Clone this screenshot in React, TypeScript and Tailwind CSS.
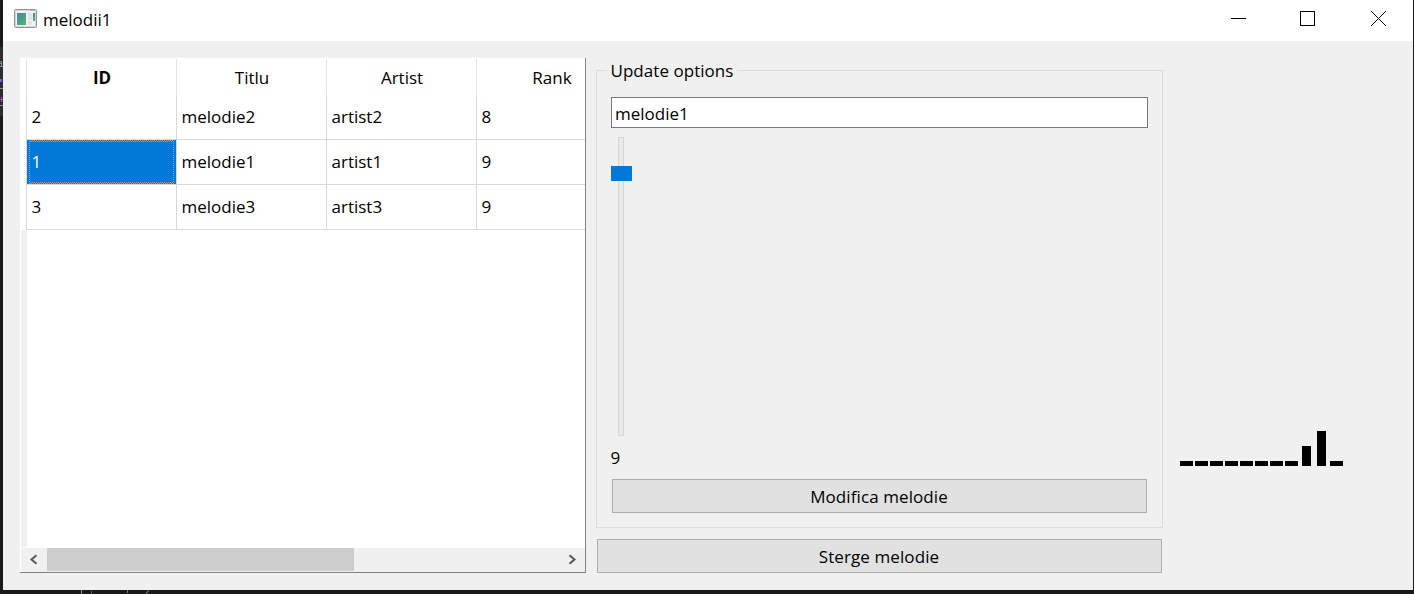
import React from "react";

const columns = ["ID", "Titlu", "Artist", "Rank"];
const rows = [
  ["2", "melodie2", "artist2", "8"],
  ["1", "melodie1", "artist1", "9"],
  ["3", "melodie3", "artist3", "9"],
];

function AppIcon() {
  return (
    <svg width="24" height="20" viewBox="0 0 24 20" className="shrink-0">
      <defs>
        <linearGradient id="pane" x1="0" y1="0" x2="0.6" y2="1">
          <stop offset="0" stopColor="#4a80b4" />
          <stop offset="1" stopColor="#52b06c" />
        </linearGradient>
      </defs>
      <rect x="0.5" y="0.5" width="22" height="18" rx="1" fill="#f2f3f4" stroke="#92979d" />
      <rect x="1.5" y="1.5" width="20" height="16" fill="none" stroke="#d3d7dc" />
      <rect x="16" y="1" width="5" height="1" fill="#a9b4d4" />
      <rect x="3" y="4" width="9" height="12" fill="url(#pane)" />
      <rect x="14" y="4" width="4" height="7" fill="#e1e3e5" />
      <rect x="14" y="12" width="4" height="4" fill="#e1e3e5" />
      <rect x="19" y="4" width="2" height="8" fill="url(#pane)" />
    </svg>
  );
}

function TitleBar() {
  return (
    <header className="flex h-[41px] shrink-0 items-start bg-white pl-[11px]">
      <div className="flex h-[38px] grow items-center pt-px">
        <div className="mb-[2px]"><AppIcon /></div>
        <span className="ml-[5px]">melodii1</span>
      </div>
      <svg width="182" height="38" viewBox="0 0 182 38" fill="none" stroke="#000" shapeRendering="crispEdges">
        <path d="M0 18.5h15" />
        <rect x="69.5" y="11.5" width="14" height="14" />
        <path d="M140 11l15 15M155 11l-15 15" shapeRendering="auto" />
      </svg>
    </header>
  );
}

const checker =
  "absolute bg-[conic-gradient(#ff8728_25%,#0078d7_0_50%,#ff8728_0_75%,#0078d7_0)] bg-[length:2px_2px] ";

function FocusFrame() {
  return (
    <>
      <i className={checker + "top-0 left-[2px] h-[2px] w-[145px]"} />
      <i className={checker + "top-[42px] left-[2px] h-[2px] w-[145px]"} />
      <i className={checker + "top-[2px] left-[2px] h-[40px] w-px"} />
      <i className={checker + "top-[2px] left-[146px] h-[40px] w-px"} />
    </>
  );
}

function SongTable() {
  return (
    <div className="flex h-[515px] w-[566px] flex-col border-r border-b border-[#82828c] bg-white pl-px">
      <div className="ml-[5px] grid h-[37px] grid-cols-[151px_150px_150px_108px] pt-px">
        {columns.map((name, i) => (
          <div
            key={name}
            className={
              "flex items-center justify-center pt-0.5 " +
              (i === 0 ? "border-x border-[#e5e5e5] pl-px font-bold" : i < 3 ? "border-r border-[#e5e5e5] pl-px" : "pl-[42px]")
            }
          >
            {name}
          </div>
        ))}
      </div>
      {rows.map((row, r) => (
        <div key={row[0]} className="ml-[5px] grid h-[45px] shrink-0 grid-cols-[151px_150px_150px_108px]">
          {row.map((value, c) => (
            <div
              key={c}
              className={
                "relative flex items-center border-b border-[#d8d8d8] pl-[4.5px] " +
                (c === 0 ? "border-x " : c < 3 ? "border-r " : "") +
                (r === 1 && c === 0 ? "bg-[#0078d7] bg-clip-padding text-white" : "")
              }
            >
              {r === 1 && c === 0 && <FocusFrame />}
              {value}
            </div>
          ))}
        </div>
      ))}
      <div className="h-[317px] w-1.5 shrink-0 bg-[#f0f0f0]" />
      <div className="mt-px flex h-[24px] items-start bg-[#f0f0f0]">
        <svg width="26" height="24" fill="none" stroke="#5a5a5a" strokeWidth="2.1">
          <path d="M15.5 7.2l-5 4.3l5 4.3" />
        </svg>
        <div className="h-[23px] w-[307px] bg-[#cdcdcd]" />
        <svg className="ml-auto" width="26" height="24" fill="none" stroke="#5a5a5a" strokeWidth="2.1">
          <path d="M10.5 7.2l5 4.3l-5 4.3" />
        </svg>
      </div>
    </div>
  );
}

function Slider() {
  return (
    <div className="relative mt-[9px] h-[299px] w-[21px]">
      <div className="ml-[7px] h-full w-1.5 border border-[#d6d6d6] bg-[#e7eaea]" />
      <div className="absolute top-[29px] left-0 h-[15px] w-[21px] bg-[#0078d7]" />
    </div>
  );
}

function PushButton({ label, className }: { label: string; className: string }) {
  return (
    <button
      className={
        "flex items-center justify-center border border-[#adadad] bg-[#e1e1e1] pt-px pr-px tracking-[0.09px] " + className
      }
    >
      {label}
    </button>
  );
}

function UpdatePanel() {
  return (
    <div className="ml-2.5 flex w-[567px] flex-col">
      <section className="mt-3 flex h-[458px] flex-col border border-[#dcdcdc] px-3.5">
        <h2 className="-mt-[13px] -ml-[4.5px] h-[26px] self-start bg-[#f0f0f0] px-1 leading-[26px] tracking-[0.04px]">Update options</h2>
        <input
          className="mt-[13px] h-[31px] w-[537px] shrink-0 border border-[#7a7a7a] bg-white pt-0.5 pl-[3px] outline-none"
          defaultValue="melodie1"
        />
        <Slider />
        <div className="mt-[9px] -ml-[0.5px] h-[26px] leading-[26px]">9</div>
        <PushButton label="Modifica melodie" className="mt-2 ml-px h-[34px] w-[535px] shrink-0" />
      </section>
      <PushButton label="Sterge melodie" className="mt-[11px] ml-px h-[34px] w-[565px]" />
    </div>
  );
}

function RankBars() {
  return (
    <svg className="mt-[373px] ml-[17px]" width="163" height="35" shapeRendering="crispEdges">
      {[0, 15, 30, 45, 60, 75, 90, 105, 150].map((x) => (
        <rect key={x} x={x} y="30" width="13" height="5" />
      ))}
      <rect x="122" y="15" width="9" height="20" />
      <rect x="137" y="0" width="9" height="35" />
    </svg>
  );
}

function DesktopLeftEdge() {
  return (
    <svg width="3" height="590" className="shrink-0">
      <rect y="47" width="3" height="69" fill="#2d2d2f" />
      <path d="M0 61.5h1.5v5M1.5 63.5h-1.5M0 66.5h3" fill="none" stroke="#7f9299" />
      <rect y="79" width="2" height="3" fill="#7160d8" />
      <rect y="88" width="3" height="1" fill="#8b8b8b" />
      <path d="M0 99.5h3M1.5 97v5" stroke="#a04fb0" />
      <rect y="105" width="3" height="1" fill="#8b8b8b" />
    </svg>
  );
}

function DesktopBottomEdge() {
  return (
    <svg width="1414" height="4" className="shrink-0">
      <rect x="81" width="1" height="4" fill="#8f8f8f" />
      <rect x="91" y="1" width="1" height="3" fill="#5c5c5c" />
      <rect x="127" width="1" height="3" fill="#777777" />
      <path d="M148.5 0.5L146 4" stroke="#3f8a3f" strokeWidth="1.3" />
    </svg>
  );
}

export default function App() {
  return (
    <div className="flex h-[594px] w-[1414px] flex-col overflow-hidden bg-[#19191b] font-['Open_Sans','Noto_Sans',sans-serif] text-[17px] leading-[24px] text-black">
      <div className="flex h-[590px] pr-px">
        <DesktopLeftEdge />
        <div className="flex grow flex-col">
          <TitleBar />
          <main className="flex h-[549px] bg-[#f0f0f0] pt-[17px] pl-[17px]">
            <SongTable />
            <UpdatePanel />
            <RankBars />
          </main>
        </div>
      </div>
      <DesktopBottomEdge />
    </div>
  );
}
